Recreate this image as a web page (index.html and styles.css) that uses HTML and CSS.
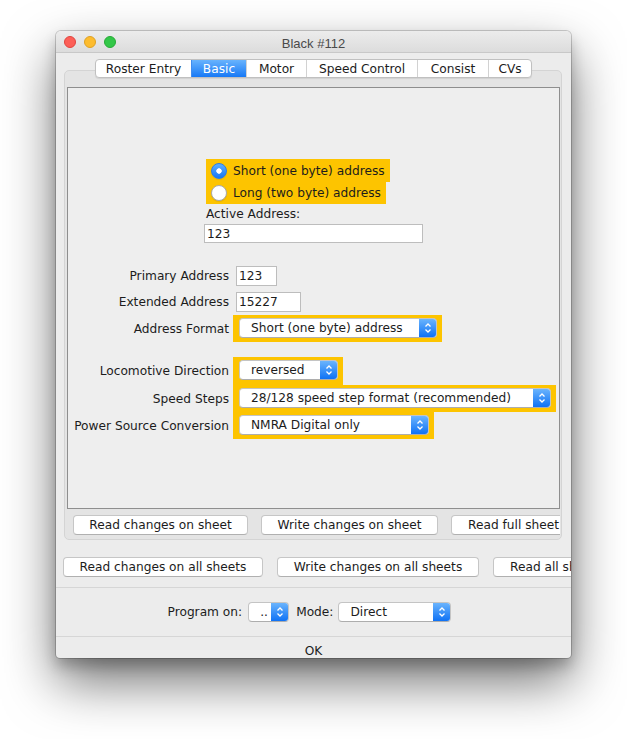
FILE: index.html
```html
<!DOCTYPE html>
<html lang="en">
<head>
    <meta charset="UTF-8">
    <title>Black #112</title>
    <link rel="stylesheet" href="styles.css">
</head>
<body>
    <div class="window">
        <div class="titlebar">
            <div class="lights">
                <span class="light red"></span>
                <span class="light amber"></span>
                <span class="light green"></span>
            </div>
            <div class="title">Black #112</div>
            <div></div>
        </div>

        <div class="tabs">
            <span class="tab t-roster">Roster Entry</span>
            <span class="tab t-basic active">Basic</span>
            <span class="tab t-motor">Motor</span>
            <span class="tab t-speed">Speed Control</span>
            <span class="tab t-consist">Consist</span>
            <span class="tab t-cvs">CVs</span>
        </div>

        <div class="tabbox">
            <div class="sheet">
                <div class="radios">
                    <div class="radio first"><span class="dot on"></span>Short (one byte) address</div>
                    <div class="radio"><span class="dot"></span>Long (two byte) address</div>
                    <div class="caption">Active Address:</div>
                    <div class="field f-active">123</div>
                </div>

                <div class="form">
                    <div class="row r-primary">
                        <label>Primary Address</label>
                        <div class="field f-primary">123</div>
                    </div>
                    <div class="row r-extended">
                        <label>Extended Address</label>
                        <div class="field f-extended">15227</div>
                    </div>
                    <div class="row r-format">
                        <label>Address Format</label>
                        <div class="hl">
                            <div class="combo c-format"><span class="val">Short (one byte) address</span><span class="arrow"><svg width="8" height="12" viewBox="0 0 8 12"><path d="M1.5 4.5 L4 2 L6.5 4.5 M1.5 7.5 L4 10 L6.5 7.5" fill="none" stroke="#fff" stroke-width="1.3"/></svg></span></div>
                        </div>
                    </div>
                    <div class="row r-direction">
                        <label>Locomotive Direction</label>
                        <div class="hl">
                            <div class="combo c-direction"><span class="val">reversed</span><span class="arrow"><svg width="8" height="12" viewBox="0 0 8 12"><path d="M1.5 4.5 L4 2 L6.5 4.5 M1.5 7.5 L4 10 L6.5 7.5" fill="none" stroke="#fff" stroke-width="1.3"/></svg></span></div>
                        </div>
                    </div>
                    <div class="row">
                        <label>Speed Steps</label>
                        <div class="hl">
                            <div class="combo c-steps"><span class="val">28/128 speed step format (recommended)</span><span class="arrow"><svg width="8" height="12" viewBox="0 0 8 12"><path d="M1.5 4.5 L4 2 L6.5 4.5 M1.5 7.5 L4 10 L6.5 7.5" fill="none" stroke="#fff" stroke-width="1.3"/></svg></span></div>
                        </div>
                    </div>
                    <div class="row">
                        <label>Power Source Conversion</label>
                        <div class="hl">
                            <div class="combo c-power"><span class="val">NMRA Digital only</span><span class="arrow"><svg width="8" height="12" viewBox="0 0 8 12"><path d="M1.5 4.5 L4 2 L6.5 4.5 M1.5 7.5 L4 10 L6.5 7.5" fill="none" stroke="#fff" stroke-width="1.3"/></svg></span></div>
                        </div>
                    </div>
                </div>
            </div>

            <div class="btnrow inner">
                <span class="btn b-read">Read changes on sheet</span>
                <span class="btn b-write">Write changes on sheet</span>
                <span class="btn">Read full sheet</span>
            </div>
        </div>

        <div class="btnrow outer">
            <span class="btn b-readall">Read changes on all sheets</span>
            <span class="btn b-writeall">Write changes on all sheets</span>
            <span class="btn">Read all sheets</span>
        </div>

        <div class="sep first-sep"></div>

        <div class="progrow">
            <span class="plabel">Program on:</span>
            <div class="combo c-prog"><span class="val">..</span><span class="arrow"><svg width="8" height="12" viewBox="0 0 8 12"><path d="M1.5 4.5 L4 2 L6.5 4.5 M1.5 7.5 L4 10 L6.5 7.5" fill="none" stroke="#fff" stroke-width="1.3"/></svg></span></div>
            <span class="mlabel">Mode:</span>
            <div class="combo c-mode"><span class="val">Direct</span><span class="arrow"><svg width="8" height="12" viewBox="0 0 8 12"><path d="M1.5 4.5 L4 2 L6.5 4.5 M1.5 7.5 L4 10 L6.5 7.5" fill="none" stroke="#fff" stroke-width="1.3"/></svg></span></div>
        </div>

        <div class="sep"></div>

        <div class="ok">OK</div>
    </div>
</body>
</html>
```

FILE: styles.css
```css
body {
    margin: 0;
    height: 739px;
    background: #fff;
    font-family: "DejaVu Sans", sans-serif;
    font-size: 12.2px;
    color: #1c1c1c;
}

.window {
    margin: 31px 0 0 56px;
    width: 515px;
    height: 627px;
    background: #ececec;
    border-radius: 5px 5px 4px 4px;
    box-shadow: 0 0 0 1px rgba(0, 0, 0, 0.18),
                0 8px 14px rgba(0, 0, 0, 0.22),
                0 24px 52px rgba(0, 0, 0, 0.55);
    display: flex;
    flex-direction: column;
    overflow: hidden;
}

/* title bar */
.titlebar {
    flex: none;
    height: 21px;
    display: grid;
    grid-template-columns: 1fr auto 1fr;
    align-items: center;
    background: linear-gradient(#ececec, #dcdcdc);
    border-bottom: 1px solid #c8c8c8;
}

.lights {
    display: flex;
    gap: 8px;
    padding: 1px 0 0 8px;
}

.light {
    width: 12px;
    height: 12px;
    border-radius: 50%;
    box-sizing: border-box;
}

.red { background: #fc5f57; border: 1px solid #e0443e; }
.amber { background: #fdbc2e; border: 1px solid #dea123; }
.green { background: #33c748; border: 1px solid #27aa35; }

.title {
    padding-top: 3px;
    font-family: "Liberation Sans", sans-serif;
    font-size: 13px;
    color: #4a4a4a;
}

/* tabs */
.tabs {
    flex: none;
    align-self: center;
    display: flex;
    height: 19px;
    box-sizing: border-box;
    margin-top: 6px;
    margin-bottom: -8px;
    position: relative;
    z-index: 1;
    background: #fff;
    border: 1px solid #c0c0c0;
    border-radius: 4px;
    box-shadow: 0 1px 1px rgba(0, 0, 0, 0.08);
    overflow: hidden;
}

.tab {
    box-sizing: border-box;
    display: flex;
    align-items: center;
    justify-content: center;
    border-left: 1px solid #d2d2d2;
    color: #1c1c1c;
}

.tab:first-child { border-left: none; }

.tab.active {
    background: linear-gradient(#68b3fd, #1779f6);
    color: #fff;
    border-left-color: #3f8cf0;
}

.t-roster { width: 95px; }
.t-basic { width: 55px; }
.t-motor { width: 60px; }
.t-speed { width: 111px; }
.t-consist { width: 71px; }
.t-cvs { width: 43px; }

/* tab body */
.tabbox {
    flex: none;
    margin: 0 9px 0 8px;
    padding: 16px 1px 4px 2px;
    background: #e4e4e4;
    border: 1px solid #d4d4d4;
    border-radius: 5px;
}

.sheet {
    height: 420px;
    background: #eeeeee;
    border: 1px solid #8e8e8e;
}

.radios {
    margin: 71px 0 0 138px;
    display: flex;
    flex-direction: column;
    align-items: flex-start;
}

.radio {
    height: 22px;
    display: flex;
    align-items: center;
    gap: 6px;
    padding: 0 5px;
    background: #fdc400;
}

.radio.first { height: 23px; }

.dot {
    width: 16px;
    height: 16px;
    box-sizing: border-box;
    border-radius: 50%;
    background: #fff;
    border: 1px solid #a9a9a9;
    box-shadow: 0 1px 1px rgba(0, 0, 0, 0.08);
}

.dot.on {
    background: radial-gradient(circle, #fff 0 2.4px, transparent 3px), linear-gradient(#5cafff, #1877f4);
    border-color: #2b7ce6;
}

.caption {
    line-height: 18px;
    margin-top: 1px;
}

.field {
    box-sizing: border-box;
    height: 20px;
    line-height: 18px;
    padding-left: 2px;
    background: #fff;
    border: 1px solid #bdbdbd;
}

.f-active {
    width: 219px;
    height: 19px;
    margin: 1px 0 0 -2px;
}

.f-primary { width: 41px; margin-left: 3px; }
.f-extended { width: 65px; margin-left: 3px; }

.form {
    margin-top: 23px;
    display: flex;
    flex-direction: column;
}

.row {
    display: flex;
    align-items: center;
}

.row label {
    width: 161px;
    margin-right: 4px;
    text-align: right;
}

.r-primary { margin-bottom: 6px; }
.r-extended { margin-bottom: 3px; }
.r-format { margin-bottom: 15px; }
.r-direction .hl { padding-bottom: 5px; }

.hl {
    background: #fdc400;
    padding: 3px 5px 4px 6px;
}

/* combo boxes */
.combo {
    display: flex;
    height: 20px;
    box-sizing: border-box;
    background: #fff;
    border: 1px solid #c4c4c4;
    border-bottom-color: #adadad;
    border-radius: 4px;
    overflow: hidden;
}

.combo .val {
    flex: 1;
    padding-left: 11px;
    line-height: 18px;
    white-space: nowrap;
    overflow: hidden;
}

.combo .arrow {
    flex: none;
    width: 17px;
    display: flex;
    align-items: center;
    justify-content: center;
    background: linear-gradient(#6ab4fd, #0f72f5);
}

.c-format { width: 198px; }
.c-direction { width: 99px; }
.c-steps { width: 312px; }
.c-power { width: 190px; }
.c-prog { width: 41px; }
.c-mode { width: 113px; }

/* buttons */
.btnrow {
    display: flex;
    overflow: hidden;
}

.btnrow.inner {
    margin-top: 6px;
    padding-left: 6px;
    gap: 13px;
}

.btnrow.outer {
    flex: none;
    margin-top: 17px;
    padding-left: 7px;
    gap: 14px;
}

.btn {
    flex: none;
    box-sizing: border-box;
    height: 20px;
    padding: 0 16px;
    display: flex;
    align-items: center;
    justify-content: center;
    white-space: nowrap;
    background: #fff;
    border: 1px solid #c6c6c6;
    border-bottom-color: #b0b0b0;
    border-radius: 4px;
}

.b-read { width: 175px; }
.b-write { width: 177px; }
.b-readall { width: 200px; }
.b-writeall { width: 202px; }

.sep {
    flex: none;
    height: 1px;
    background: #d6d6d6;
    margin-top: 14px;
}

.sep.first-sep { margin-top: 10px; }

.progrow {
    flex: none;
    margin-top: 14px;
    display: flex;
    align-items: center;
    justify-content: center;
    padding-right: 8px;
}

.plabel { margin-right: 6px; }
.mlabel { margin: 0 5px 0 7px; }

.ok {
    flex: 1;
    padding-top: 7px;
    text-align: center;
    line-height: 15px;
}
```
